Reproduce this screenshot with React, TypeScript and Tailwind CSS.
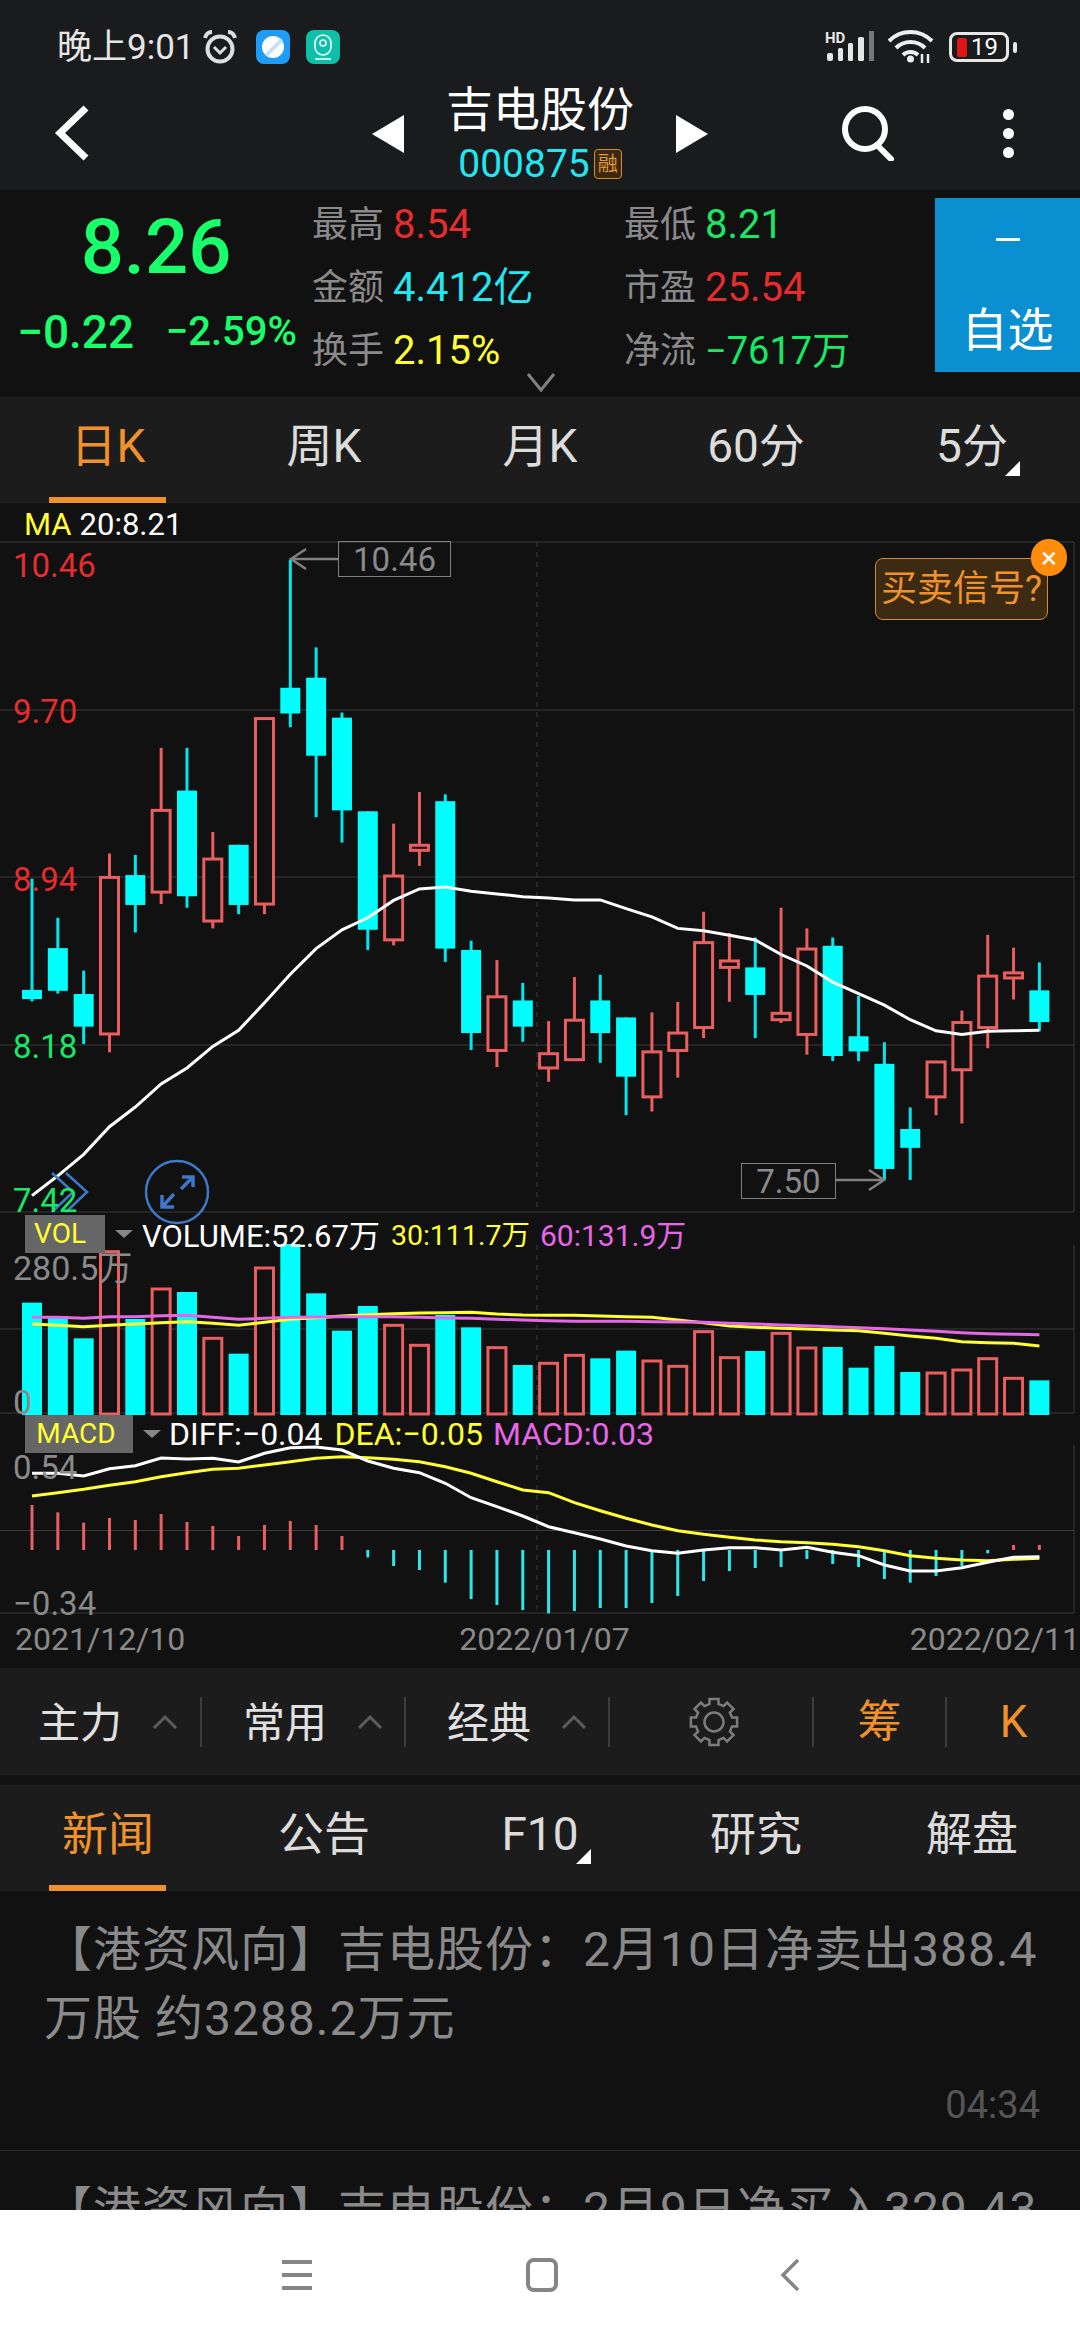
// y values below are in chart units; fy/vy map them to page pixels
const fy = (z: number) => 500 + z / 2.178;
const vy = (z: number) => 1200 + z / 3;
const cx = (i: number) => 32 + i * 25.83;

type Candle = [number, number, number, number, "c" | "r"];

const candles: Candle[] = [
  [825, 1067, 1087, 1092, "c"], [910, 976, 1069, 1075, "c"], [1025, 1076, 1147, 1185, "c"], [770, 822, 1163, 1203, "r"],
  [773, 817, 882, 942, "c"], [540, 676, 854, 880, "r"], [540, 633, 863, 888, "c"], [723, 782, 917, 933, "r"],
  [751, 751, 882, 902, "c"], [476, 476, 880, 902, "r"], [130, 409, 465, 495, "c"], [321, 387, 557, 691, "c"],
  [463, 474, 676, 746, "c"], [678, 678, 936, 980, "c"], [705, 819, 958, 970, "r"], [636, 752, 763, 797, "r"],
  [641, 656, 977, 1006, "c"], [960, 980, 1161, 1198, "c"], [1002, 1082, 1199, 1235, "r"], [1052, 1090, 1147, 1180, "c"],
  [1135, 1206, 1237, 1267, "r"], [1039, 1133, 1219, 1219, "r"], [1034, 1090, 1161, 1226, "c"], [1127, 1127, 1256, 1340, "c"],
  [1116, 1202, 1300, 1332, "r"], [1093, 1161, 1199, 1258, "r"], [897, 964, 1149, 1172, "r"], [943, 1004, 1018, 1093, "r"],
  [953, 1018, 1078, 1172, "c"], [888, 1118, 1132, 1139, "r"], [933, 978, 1164, 1208, "r"], [953, 971, 1211, 1222, "c"],
  [1080, 1168, 1201, 1222, "c"], [1181, 1228, 1457, 1481, "c"], [1323, 1370, 1411, 1481, "c"], [1224, 1224, 1300, 1340, "r"],
  [1112, 1138, 1241, 1358, "r"], [947, 1037, 1149, 1194, "r"], [975, 1030, 1041, 1088, "r"], [1007, 1068, 1137, 1157, "c"],
];

const ma20 = [1515, 1472, 1425, 1365, 1322, 1272, 1237, 1190, 1155, 1095, 1033, 977, 936, 910, 872, 847, 843, 852, 858, 864, 867, 871, 871, 890, 908, 933, 938, 948, 958, 990, 1015, 1050, 1075, 1100, 1132, 1156, 1164, 1157, 1156, 1155];
const volTops = [308, 348, 415, 155, 357, 267, 276, 415, 461, 204, 132, 280, 392, 318, 376, 436, 345, 382, 443, 495, 490, 466, 475, 452, 483, 499, 395, 473, 453, 400, 444, 441, 503, 438, 516, 519, 510, 476, 535, 541];
const vol30 = [372, 376, 380, 376, 372, 368, 365, 370, 376, 367, 358, 353, 348, 344, 341, 339, 338, 337, 342, 345, 346, 346, 348, 350, 352, 360, 368, 378, 382, 385, 387, 390, 392, 400, 408, 415, 425, 428, 430, 438];
const vol60 = [352, 352, 355, 350, 350, 347, 346, 352, 358, 355, 352, 351, 350, 350, 350, 352, 354, 355, 358, 360, 362, 364, 364, 364, 365, 366, 367, 370, 372, 375, 377, 380, 383, 386, 390, 394, 398, 401, 403, 404];
const macdEnds = [915, 937, 968, 954, 960, 942, 966, 978, 1008, 975, 963, 975, 1008, 1072, 1098, 1110, 1148, 1197, 1215, 1230, 1240, 1233, 1224, 1224, 1209, 1188, 1143, 1113, 1104, 1101, 1077, 1092, 1101, 1137, 1148, 1128, 1098, 1060, 1035, 1035];
const diff = [820, 820, 828, 806, 797, 774, 777, 775, 786, 760, 743, 741, 750, 783, 805, 818, 850, 893, 920, 948, 980, 998, 1017, 1038, 1052, 1060, 1050, 1043, 1043, 1050, 1042, 1057, 1067, 1095, 1113, 1113, 1103, 1087, 1072, 1070];
const dea = [888, 878, 868, 856, 845, 830, 818, 808, 805, 795, 785, 775, 770, 773, 778, 785, 800, 820, 845, 870, 878, 908, 932, 955, 975, 992, 1003, 1012, 1020, 1025, 1028, 1033, 1040, 1052, 1067, 1075, 1080, 1082, 1078, 1075];

const points = (vals: number[], map: (z: number) => number) =>
  vals.map((v, i) => `${cx(i).toFixed(1)},${map(v).toFixed(1)}`).join(" ");

const RED = "#e95f5f";
const CYAN = "#00ffff";

function ChartDrawing() {
  return (
    <svg className="absolute inset-0" width={1080} height={1162} viewBox="0 503 1080 1162">
      {/* grid */}
      {[542, 710, 877, 1045, 1212, 1329, 1413, 1530.5, 1613].map((y) => (
        <line key={y} x1={0} x2={1074} y1={y} y2={y} stroke="#3a3a3a" strokeWidth={1} />
      ))}
      {[[542, 1212], [1245, 1413], [1445, 1613]].map(([a, b]) => (
        <g key={a}>
          <line x1={1074} x2={1074} y1={a} y2={b} stroke="#3a3a3a" strokeWidth={1} />
          <line x1={537} x2={537} y1={a} y2={b} stroke="#3a3a3a" strokeWidth={1} strokeDasharray="5 5" />
        </g>
      ))}

      {/* candles */}
      {candles.map(([hi, top, bot, lo, kind], i) => {
        const x = cx(i);
        const color = kind === "c" ? "#00e8ee" : RED;
        return (
          <g key={i}>
            <line x1={x} x2={x} y1={fy(hi)} y2={fy(lo)} stroke={color} strokeWidth={3} />
            {kind === "c" ? (
              <rect x={x - 10} y={fy(top)} width={20} height={fy(bot) - fy(top)} fill={CYAN} />
            ) : (
              <rect x={x - 9} y={fy(top)} width={18} height={fy(bot) - fy(top)} fill="#111112" stroke={RED} strokeWidth={3} />
            )}
          </g>
        );
      })}
      <polyline points={points(ma20, fy)} fill="none" stroke="#fff" strokeWidth={3} />

      {/* high and low markers */}
      <path d="M338 559H291M306 549L291 559L306 569" fill="none" stroke="#808080" strokeWidth={2.5} />
      <path d="M836 1180H884M869 1170L884 1180L869 1190" fill="none" stroke="#808080" strokeWidth={2.5} />

      {/* volume */}
      {volTops.map((top, i) => {
        const x = cx(i);
        return candles[i][4] === "c" ? (
          <rect key={i} x={x - 10} y={vy(top)} width={20} height={1415 - vy(top)} fill={CYAN} />
        ) : (
          <rect key={i} x={x - 9} y={vy(top)} width={18} height={1414 - vy(top)} fill="#111112" stroke={RED} strokeWidth={3} />
        );
      })}
      <polyline points={points(vol30, vy)} fill="none" stroke="#ffff33" strokeWidth={3} />
      <polyline points={points(vol60, vy)} fill="none" stroke="#e667e6" strokeWidth={3} />

      {/* macd */}
      {macdEnds.map((end, i) => {
        const red = i < 13 || i > 37;
        return (
          <rect
            key={i}
            x={cx(i) - 1.5}
            y={Math.min(vy(end), 1550)}
            width={3}
            height={Math.abs(vy(end) - 1550)}
            fill={red ? RED : "#2ee6ea"}
          />
        );
      })}
      <polyline points={points(dea, vy)} fill="none" stroke="#ffff33" strokeWidth={3} />
      <polyline points={points(diff, vy)} fill="none" stroke="#fff" strokeWidth={3} />

      {/* slide arrow and expand button */}
      <path d="M52 1173L73 1192L52 1212M66 1173L87 1192L66 1212" fill="none" stroke="#3d78c9" strokeWidth={2.5} />
      <circle cx={177} cy={1192} r={31} fill="none" stroke="#3d78c9" strokeWidth={2.5} />
      <path d="M181 1189L192 1178M182 1177H193V1187M174 1194L163 1206M162 1195V1207H174" fill="none" stroke="#3d78c9" strokeWidth={3.5} />
    </svg>
  );
}

// eight square teeth around a ring
function gearPoints(cxg: number, cyg: number, outer: number, inner: number) {
  const pts: string[] = [];
  for (let k = 0; k < 8; k++) {
    const a = k * 45;
    [[outer, a - 11], [outer, a + 11], [inner, a + 14], [inner, a + 31]].forEach(([r, deg]) => {
      const rad = (deg * Math.PI) / 180;
      pts.push(`${(cxg + r * Math.cos(rad)).toFixed(1)},${(cyg + r * Math.sin(rad)).toFixed(1)}`);
    });
  }
  return pts.join(" ");
}

function StatusBar() {
  return (
    <div className="flex h-[84px] items-center justify-between pl-[57px] pr-[63px] pt-[10px]">
      <div className="flex items-center">
        <span className="text-[35px] leading-none text-[#e6e6e6]">晚上9:01</span>
        <svg className="ml-[5px]" width={40} height={38} viewBox="0 0 40 38" fill="none" stroke="#dedede" strokeWidth={4}>
          <circle cx={20} cy={21} r={12.5} />
          <path d="M14 19L20 25L26 19" strokeWidth={3} />
          <path d="M5 10C6 6 9 4 12 4M35 10C34 6 31 4 28 4" strokeWidth={4} />
        </svg>
        <svg className="ml-[16px]" width={34} height={34} viewBox="0 0 34 34">
          <rect width={34} height={34} rx={8} fill="#1f9cf7" />
          <circle cx={17} cy={17} r={11} fill="#fff" />
          <path d="M9 24L25 8L27 11L12 26Z" fill="#bfe2fb" />
        </svg>
        <svg className="ml-[16px]" width={34} height={34} viewBox="0 0 34 34">
          <rect width={34} height={34} rx={8} fill="#10bfa8" />
          <rect x={9} y={5} width={16} height={20} rx={8} fill="none" stroke="#e8fffb" strokeWidth={1.6} />
          <circle cx={17} cy={13} r={3} fill="none" stroke="#e8fffb" strokeWidth={1.6} />
          <path d="M9 29H25" stroke="#e8fffb" strokeWidth={1.6} />
        </svg>
      </div>
      <div className="flex items-center">
        <svg width={52} height={34} viewBox="0 0 52 34">
          <text x={0} y={13} fontSize={15} fontWeight={700} fill="#e6e6e6">HD</text>
          <rect x={2} y={23} width={6} height={8} rx={2} fill="#e6e6e6" />
          <rect x={13} y={18} width={5} height={13} rx={1.5} fill="#e6e6e6" />
          <rect x={23} y={13} width={5} height={18} rx={1.5} fill="#e6e6e6" />
          <rect x={33} y={7} width={6} height={24} rx={1.5} fill="#e6e6e6" />
          <rect x={44} y={1} width={5} height={30} fill="#777" />
        </svg>
        <svg className="ml-[11px]" width={46} height={34} viewBox="0 0 46 34" fill="none" stroke="#eee" strokeWidth={4}>
          <path d="M1 11C13 -1 32 -1 44 11M8 18C16 10 29 10 37 18M15 25C19 21 26 21 30 25" />
          <circle cx={22.5} cy={29} r={3.5} fill="#eee" stroke="none" />
          <path d="M34 24V33M40 24V33" strokeWidth={2.5} />
        </svg>
        <div className="ml-[15px] flex items-center">
          <div className="flex h-[30px] w-[60px] items-center rounded-[8px] border-[3px] border-[#e6e6e6] pl-[5px]">
            <span className="h-[19px] w-[10px] rounded-[2px] bg-[#e01515]" />
            <span className="ml-[4px] text-[24px] leading-none text-white">19</span>
          </div>
          <span className="ml-[4px] h-[11px] w-[4px] rounded-[2px] bg-[#e6e6e6]" />
        </div>
      </div>
    </div>
  );
}

function Header() {
  return (
    <div className="grid h-[106px] grid-cols-[1fr_auto_1fr]">
      <div className="flex items-center pb-[8px] pl-[53px]">
        <svg width={38} height={56} viewBox="0 0 38 56" fill="none" stroke="#fff" strokeWidth={7}>
          <path d="M33 3L7 28L33 53" />
        </svg>
      </div>
      <div className="flex items-start">
        <svg className="mr-[42px] mt-[31px]" width={32} height={38} viewBox="0 0 32 38">
          <path d="M32 0V38L0 19Z" fill="#fff" />
        </svg>
        <div className="flex w-[188px] flex-col items-center">
          <span className="text-[47px] leading-[52px] text-white whitespace-nowrap">吉电股份</span>
          <div className="mt-[6px] flex items-center whitespace-nowrap">
            <span className="text-[39px] leading-[44px] text-[#22e6f0]">000875</span>
            <span className="ml-[4px] flex h-[30px] w-[28px] items-center justify-center rounded-[4px] border border-[#d88a2c] bg-[#3a2810] text-[20px] leading-none text-[#e09a3c]">融</span>
          </div>
        </div>
        <svg className="ml-[42px] mt-[31px]" width={32} height={38} viewBox="0 0 32 38">
          <path d="M0 0V38L32 19Z" fill="#fff" />
        </svg>
      </div>
      <div className="flex items-center justify-end pb-[8px] pr-[66px]">
        <svg width={56} height={56} viewBox="0 0 56 56" fill="none" stroke="#fff" strokeWidth={6}>
          <circle cx={24} cy={24} r={20} />
          <path d="M36 40L50 54" strokeLinecap="round" />
        </svg>
        <div className="ml-[106px] flex flex-col gap-[8px]">
          <span className="h-[11px] w-[11px] rounded-full bg-white" />
          <span className="h-[11px] w-[11px] rounded-full bg-white" />
          <span className="h-[11px] w-[11px] rounded-full bg-white" />
        </div>
      </div>
    </div>
  );
}

function Stat({ label, value, color, size = "text-[40px]" }: { label: string; value: string; color: string; size?: string }) {
  return (
    <div className="flex h-[63px] items-center whitespace-nowrap">
      <span className="text-[36px] leading-none text-[#8a8a8a]">{label}</span>
      <span className={`ml-[9px] leading-none ${size} ${color}`}>{value}</span>
    </div>
  );
}

function Quote() {
  return (
    <div className="relative flex h-[207px] bg-[#111112]">
      <div className="flex w-[312px] flex-col items-center pt-[15px]">
        <span className="text-[76px] font-medium leading-[84px] text-[#19ff6b]">8.26</span>
        <div className="mt-[20px] flex w-full items-center justify-between whitespace-nowrap pl-[17px] pr-[15px] font-medium text-[#19ff6b]">
          <span className="text-[46px] leading-none">−0.22</span>
          <span className="text-[40px] leading-none">−2.59%</span>
        </div>
      </div>
      <div className="grid w-[312px] content-start pt-[3px]">
        <Stat label="最高" value="8.54" color="text-[#e62c2c]" />
        <Stat label="金额" value="4.412亿" color="text-[#22e6f0]" />
        <Stat label="换手" value="2.15%" color="text-[#ffff33]" />
      </div>
      <div className="grid flex-1 content-start pt-[3px]">
        <Stat label="最低" value="8.21" color="text-[#19e866]" />
        <Stat label="市盈" value="25.54" color="text-[#e62c2c]" />
        <Stat label="净流" value="−7617万" color="text-[#19e866]" size="text-[38px]" />
      </div>
      <div className="mt-[8px] flex h-[174px] w-[145px] flex-col items-center bg-[#0a8fd0] text-white">
        <span className="mt-[40px] h-[3px] w-[24px] bg-white" />
        <span className="mt-[66px] text-[46px] leading-none">自选</span>
      </div>
      <svg className="absolute bottom-[5px] left-[526px]" width={30} height={20} viewBox="0 0 30 20" fill="none" stroke="#808080" strokeWidth={3}>
        <path d="M2 2L15 18L28 2" />
      </svg>
    </div>
  );
}

function TabStrip({ items, corner }: { items: string[]; corner: number }) {
  return (
    <div className="grid h-[106px] grid-cols-5 bg-[#1c1c1d]">
      {items.map((item, i) => (
        <div key={item} className="relative flex items-center justify-center">
          <span className={`relative -translate-y-[4px] text-[46px] leading-none ${i === 0 ? "text-[#f0922b]" : "text-[#dcdcdc]"}`}>
            {item}
            {i === corner && (
              <svg className="absolute -bottom-[7px] -right-[12px]" width={15} height={15} viewBox="0 0 15 15">
                <path d="M15 0V15H0Z" fill="#fff" />
              </svg>
            )}
          </span>
          {i === 0 && <span className="absolute bottom-0 left-[49px] h-[6px] w-[117px] bg-[#f0922b]" />}
        </div>
      ))}
    </div>
  );
}

function Chart() {
  return (
    <div className="relative h-[1162px] overflow-hidden bg-[#111112] text-[33px] leading-none">
      <ChartDrawing />
      <div className="absolute left-[24px] top-[7px] flex text-[31px] leading-[30px] whitespace-nowrap">
        <span className="text-[#ffff33]">MA</span>
        <span className="ml-[8px] text-white">20:8.21</span>
      </div>

      <span className="absolute left-[13px] top-[46px] text-[#e62c2c]">10.46</span>
      <span className="absolute left-[13px] top-[192px] text-[#e62c2c]">9.70</span>
      <span className="absolute left-[13px] top-[360px] text-[#e62c2c]">8.94</span>
      <span className="absolute left-[13px] top-[527px] text-[#19e866]">8.18</span>
      <span className="absolute left-[13px] top-[681px] text-[#19e866]">7.42</span>

      <span className="absolute left-[338px] top-[38px] flex h-[36px] w-[113px] items-center justify-center border border-[#808080] text-[#8a8a8a]">10.46</span>
      <span className="absolute left-[741px] top-[660px] flex h-[36px] w-[95px] items-center justify-center border border-[#808080] text-[#8a8a8a]">7.50</span>

      <div className="absolute left-[875px] top-[55px] flex h-[62px] w-[173px] items-center justify-center rounded-[8px] border border-[#d88a2c] bg-[#3c2a12] text-[36px] text-[#f0922b] whitespace-nowrap">
        买卖信号?
      </div>
      <span className="absolute left-[1031px] top-[36px] flex h-[37px] w-[36px] items-center justify-center rounded-full bg-[#ff8c0a] text-[30px] text-white">×</span>

      {/* volume legend */}
      <div className="absolute left-[25px] top-[712px] flex items-center whitespace-nowrap">
        <span className="flex h-[38px] w-[80px] items-center justify-center bg-[#666] pr-[10px] text-[28px] text-[#ffff33]">VOL</span>
        <span className="ml-[10px] h-0 w-0 border-x-[9px] border-t-[8px] border-x-transparent border-t-[#888]" />
        <span className="ml-[9px] translate-y-[2px] text-[31px] text-white">VOLUME:52.67万</span>
        <span className="ml-[11px] translate-y-[2px] text-[28.5px] text-[#ffff33]">30:111.7万</span>
        <span className="ml-[10px] translate-y-[2px] text-[30px] text-[#e667e6]">60:131.9万</span>
      </div>
      <span className="absolute left-[13px] top-[748px] text-[34px] text-[#8a8a8a]">280.5万</span>
      <span className="absolute left-[13px] top-[882px] text-[34px] text-[#8a8a8a]">0</span>

      {/* macd legend */}
      <div className="absolute left-[25px] top-[912px] flex items-center whitespace-nowrap text-[32px]">
        <span className="flex h-[38px] w-[108px] items-center justify-center bg-[#666] pr-[6px] text-[28px] text-[#ffff33]">MACD</span>
        <span className="ml-[10px] h-0 w-0 border-x-[9px] border-t-[8px] border-x-transparent border-t-[#888]" />
        <span className="ml-[8px] text-white">DIFF:−0.04</span>
        <span className="ml-[12px] text-[#ffff33]">DEA:−0.05</span>
        <span className="ml-[10px] text-[#e667e6]">MACD:0.03</span>
      </div>
      <span className="absolute left-[13px] top-[948px] text-[#8a8a8a]">0.54</span>
      <span className="absolute left-[13px] top-[1084px] text-[#8a8a8a]">−0.34</span>

      {/* time axis */}
      <div className="absolute inset-x-0 top-[1120px] flex justify-between pl-[15px] text-[32px] text-[#8a8a8a]">
        <span>2021/12/10</span>
        <span className="-translate-x-[3px]">2022/01/07</span>
        <span>2022/02/11</span>
      </div>
    </div>
  );
}

function Caret() {
  return (
    <svg className="ml-[30px]" width={26} height={16} viewBox="0 0 26 16" fill="none" stroke="#5c5c5c" strokeWidth={3}>
      <path d="M2 14L13 3L24 14" />
    </svg>
  );
}

function Toolbar() {
  const groups = ["主力", "常用", "经典"];
  return (
    <div className="flex h-[107px] items-center bg-[#1c1c1d] text-[42px] leading-none text-[#e0e0e0]">
      {groups.map((g, i) => (
        <div key={g} className={`flex h-[50px] items-center border-r-2 border-[#3c3c3c] ${i === 0 ? "w-[202px] pl-[38px]" : "w-[204px] pl-[41px]"}`}>
          <span className="translate-y-[2px]">{g}</span>
          <Caret />
        </div>
      ))}
      <div className="flex h-[50px] w-[204px] items-center justify-center border-r-2 border-[#3c3c3c] pl-[6px]">
        <svg width={54} height={54} viewBox="0 0 54 54" fill="none" stroke="#7c7c7c" strokeWidth={2.5}>
          <polygon points={gearPoints(27, 27, 23.5, 18.5)} />
          <circle cx={27} cy={27} r={9.5} />
        </svg>
      </div>
      <div className="flex h-[50px] w-[133px] items-center justify-center border-r-2 border-[#3c3c3c] text-[44px] text-[#f0922b]">筹</div>
      <div className="flex flex-1 items-center justify-center text-[44px] text-[#f0922b]">K</div>
    </div>
  );
}

function NewsItem({ title, time }: { title: string; time: string }) {
  return (
    <div className="border-b border-[#2c2c2c] pl-[44px] pr-[40px] pt-[24px]">
      <p className="text-[48px] leading-[69px] tracking-[1px] text-[#8a8a8a]">{title}</p>
      <p className="mt-[30px] pb-[23px] text-right text-[38px] leading-[44px] text-[#555]">{time}</p>
    </div>
  );
}

export default function App() {
  return (
    <div className="flex h-[2340px] w-[1080px] flex-col overflow-hidden bg-[#1a1b1d] font-['Roboto','Noto_Sans_CJK_SC',sans-serif]">
      <StatusBar />
      <Header />
      <Quote />
      <TabStrip items={["日K", "周K", "月K", "60分", "5分"]} corner={4} />
      <Chart />
      <div className="h-[3px] bg-[#111112]" />
      <Toolbar />
      <div className="h-[10px] bg-[#111112]" />
      <TabStrip items={["新闻", "公告", "F10", "研究", "解盘"]} corner={2} />
      <div className="min-h-0 flex-1 overflow-hidden bg-[#111112]">
        <NewsItem title="【港资风向】吉电股份：2月10日净卖出388.4万股 约3288.2万元" time="04:34" />
        <NewsItem title="【港资风向】吉电股份：2月9日净买入329.43万股 约2771.5万元" time="04:31" />
      </div>
      {/* system navigation */}
      <div className="flex h-[130px] items-center justify-center bg-white">
        <svg width={34} height={34} viewBox="0 0 34 34" stroke="#858585" strokeWidth={4}>
          <path d="M2 4H32M2 17H32M2 30H32" />
        </svg>
        <svg className="ml-[211px]" width={34} height={34} viewBox="0 0 34 34" fill="none" stroke="#858585" strokeWidth={4}>
          <rect x={3} y={2} width={28} height={30} rx={6} />
        </svg>
        <svg className="ml-[220px]" width={22} height={34} viewBox="0 0 22 34" fill="none" stroke="#858585" strokeWidth={3.5}>
          <path d="M19 2L4 17L19 32" />
        </svg>
      </div>
    </div>
  );
}
